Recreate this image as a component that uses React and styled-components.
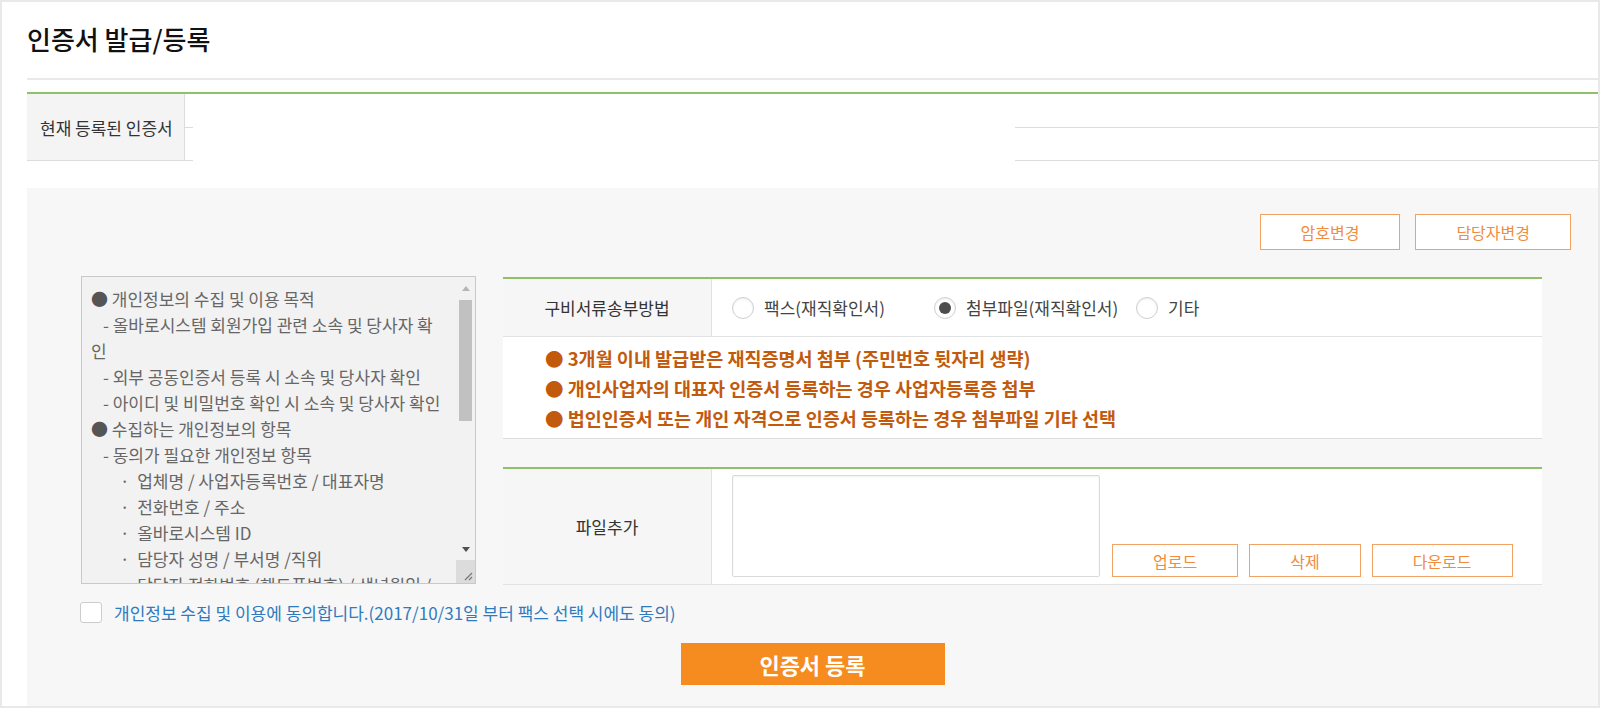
import React from "react";
import styled, { createGlobalStyle } from "styled-components";

const GlobalStyle = createGlobalStyle`
  body {
    margin: 0;
    background: #ffffff;
    font-family: "Noto Sans CJK KR", "Noto Sans", sans-serif;
    color: #333;
  }
  * { box-sizing: border-box; }
`;

const Frame = styled.div`
  width: 1600px;
  height: 708px;
  border: 2px solid #e9e9e9;
  display: flex;
  flex-direction: column;
  overflow: hidden;
`;

const Header = styled.div`
  margin-left: 25px;
  padding: 20px 0 22px;
  border-bottom: 2px solid #e9e9e9;
`;

const Title = styled.h1`
  margin: 0;
  font-size: 26px;
  line-height: 34px;
  font-weight: 500;
  color: #111;
`;

const CertTable = styled.div`
  margin: 12px 0 0 25px;
  border-top: 2px solid #8fc06c;
  display: flex;
  height: 69px;
`;

const CertTh = styled.div`
  width: 158px;
  background: #f4f4f4;
  border-right: 1px solid #dcdcdc;
  border-bottom: 1px solid #dcdcdc;
  display: flex;
  align-items: center;
  padding-left: 13px;
  font-size: 17px;
  color: #333;
  white-space: nowrap;
`;

const CertLines = styled.div`
  width: ${(p) => (p.$width ? `${p.$width}px` : "auto")};
  flex: ${(p) => (p.$width ? "none" : "1")};
  display: flex;
  flex-direction: column;
`;

const CertLine = styled.div`
  flex: 1;
  border-bottom: 1px solid #dcdcdc;
`;

const CertBlank = styled.div`
  width: 822px;
  background: #ffffff;
`;

const Panel = styled.div`
  flex: 1;
  margin: 27px 0 0 25px;
  background: #f7f7f7;
  padding: 26px 27px 0 27px;
  display: flex;
  flex-direction: column;
`;

const TopButtons = styled.div`
  display: flex;
  justify-content: flex-end;
  gap: 15px;
`;

const LineButton = styled.button`
  height: ${(p) => p.$h}px;
  padding: 0 40px;
  border: 1px solid #f2a263;
  background: #ffffff;
  color: #ef8c3d;
  font-family: inherit;
  font-size: 16px;
  cursor: pointer;
`;

const Form = styled.div`
  margin: 26px 0 0 27px;
  display: flex;
  gap: 27px;
`;

const TermsBox = styled.div`
  width: 395px;
  height: 308px;
  border: 1px solid #c9c9c9;
  background: #f2f2f2;
  display: flex;
`;

const TermsText = styled.div`
  flex: 1;
  padding: 9px 11px 0 9px;
  overflow: hidden;
  font-size: 17px;
  line-height: 26px;
  color: #666;
`;

const TermLine = styled.div`
  text-indent: ${(p) => p.$indent || 0}px;
  white-space: pre-wrap;
`;

const Dot = styled.span`
  color: #555;
`;

const ScrollBar = styled.div`
  width: 19px;
  display: flex;
  flex-direction: column;
`;

const ArrowButton = styled.div`
  height: 22px;
  display: flex;
  align-items: center;
  justify-content: center;
`;

const Track = styled.div`
  flex: 1;
`;

const Thumb = styled.div`
  margin: 1px 3px 0;
  height: 121px;
  background: #c1c1c1;
`;

const Corner = styled.div`
  height: 23px;
  background: #dcdcdc;
  display: flex;
  align-items: flex-end;
  justify-content: flex-end;
  padding: 0 2px 2px 0;
`;

const RightCol = styled.div`
  width: 1039px;
  padding-top: 1px;
`;

const FormTable = styled.div`
  border-top: 2px solid #8fc06c;
  margin-top: ${(p) => p.$gap || 0}px;
`;

const Row = styled.div`
  display: flex;
  height: ${(p) => p.$h}px;
  border-bottom: 1px solid #e2e2e2;
`;

const Th = styled.div`
  width: 209px;
  background: #f6f6f6;
  border-right: 1px solid #e2e2e2;
  display: flex;
  align-items: center;
  justify-content: center;
  font-size: 17px;
  color: #333;
`;

const Td = styled.div`
  flex: 1;
  background: #ffffff;
  display: flex;
  align-items: ${(p) => p.$align || "center"};
  padding: ${(p) => p.$pad || "0 0 0 20px"};
`;

const RadioOption = styled.label`
  width: 202px;
  display: flex;
  align-items: center;
  gap: 10px;
  font-size: 17px;
  color: #444;
`;

const RadioMark = styled.span`
  width: 22px;
  height: 22px;
  border-radius: 50%;
  border: 1px solid #cfcfcf;
  background: #ffffff;
  box-shadow: inset 0 1px 2px rgba(0, 0, 0, 0.08);
  display: flex;
  align-items: center;
  justify-content: center;
  flex: none;
  &::after {
    content: "";
    width: 12px;
    height: 12px;
    border-radius: 50%;
    background: ${(p) => (p.$checked ? "#4d4d4d" : "transparent")};
  }
`;

const Notice = styled.div`
  background: #ffffff;
  padding: 6px 0 5px 42px;
  border-bottom: 1px solid #dcdcdc;
  font-size: 18.5px;
  line-height: 30px;
  font-weight: 700;
  color: #c25a0e;
`;

const FileBox = styled.div`
  width: 368px;
  height: 102px;
  border: 1px solid #d9d9d9;
  border-radius: 2px;
  background: #ffffff;
  box-shadow: inset 0 1px 2px rgba(0, 0, 0, 0.06);
  margin-right: 12px;
`;

const FileButtons = styled.div`
  display: flex;
  gap: 11px;
`;

const AgreeRow = styled.label`
  margin: 15px 0 0 26px;
  display: flex;
  align-items: center;
  gap: 12px;
  font-size: 17px;
  color: #2f7bbf;
`;

const CheckBox = styled.span`
  width: 22px;
  height: 21px;
  border: 1px solid #cccccc;
  border-radius: 3px;
  background: #ffffff;
`;

const SubmitRow = styled.div`
  margin-top: 18px;
  display: flex;
  justify-content: center;
`;

const SubmitButton = styled.button`
  width: 264px;
  height: 42px;
  border: none;
  background: #f68b1f;
  color: #ffffff;
  font-family: inherit;
  font-size: 22px;
  font-weight: 700;
  cursor: pointer;
`;

const terms = [
  { text: "개인정보의 수집 및 이용 목적", dot: true },
  { text: "- 올바로시스템 회원가입 관련 소속 및 당사자 확인", indent: 12 },
  { text: "- 외부 공동인증서 등록 시 소속 및 당사자 확인", indent: 12 },
  { text: "- 아이디 및 비밀번호 확인 시 소속 및 당사자 확인", indent: 12 },
  { text: "수집하는 개인정보의 항목", dot: true },
  { text: "- 동의가 필요한 개인정보 항목", indent: 12 },
  { text: "·  업체명 / 사업자등록번호 / 대표자명", indent: 29 },
  { text: "·  전화번호 / 주소", indent: 29 },
  { text: "·  올바로시스템 ID", indent: 29 },
  { text: "·  담당자 성명 / 부서명 /직위", indent: 29 },
  { text: "·  담당자 전화번호 (핸드폰번호) / 생년월일 / 이메일", indent: 29 },
  { text: "- 수집 및 이용 목적 달성 시까지 보관", indent: 12 },
];

const notices = [
  "3개월 이내 발급받은 재직증명서 첨부 (주민번호 뒷자리 생략)",
  "개인사업자의 대표자 인증서 등록하는 경우 사업자등록증 첨부",
  "법인인증서 또는 개인 자격으로 인증서 등록하는 경우 첨부파일 기타 선택",
];

const radios = [
  { label: "팩스(재직확인서)" },
  { label: "첨부파일(재직확인서)", checked: true },
  { label: "기타" },
];

function Arrow({ down, color }) {
  return (
    <svg width="8" height="5" viewBox="0 0 8 5">
      <path d={down ? "M0 0 L8 0 L4 5 Z" : "M0 5 L8 5 L4 0 Z"} fill={color} />
    </svg>
  );
}

function ResizeGrip() {
  return (
    <svg width="10" height="10" viewBox="0 0 10 10">
      <path d="M9 2 L2 9 M9 6 L6 9" stroke="#777" strokeWidth="1.2" />
    </svg>
  );
}

export default function App() {
  return (
    <>
      <GlobalStyle />
      <Frame>
        <Header>
          <Title>인증서 발급/등록</Title>
        </Header>

        <CertTable>
          <CertTh>현재 등록된 인증서</CertTh>
          <CertLines $width={8}>
            <CertLine />
            <CertLine />
          </CertLines>
          <CertBlank />
          <CertLines>
            <CertLine />
            <CertLine />
          </CertLines>
        </CertTable>

        <Panel>
          <TopButtons>
            <LineButton $h={36}>암호변경</LineButton>
            <LineButton $h={36}>담당자변경</LineButton>
          </TopButtons>

          <Form>
            <TermsBox>
              <TermsText>
                {terms.map((t, i) => (
                  <TermLine key={i} $indent={t.indent}>
                    {t.dot && <Dot>● </Dot>}
                    {t.text}
                  </TermLine>
                ))}
              </TermsText>
              <ScrollBar>
                <ArrowButton>
                  <Arrow color="#b5b5b5" />
                </ArrowButton>
                <Track>
                  <Thumb />
                </Track>
                <ArrowButton>
                  <Arrow down color="#505050" />
                </ArrowButton>
                <Corner>
                  <ResizeGrip />
                </Corner>
              </ScrollBar>
            </TermsBox>

            <RightCol>
              <FormTable>
                <Row $h={58}>
                  <Th>구비서류송부방법</Th>
                  <Td>
                    {radios.map((r) => (
                      <RadioOption key={r.label}>
                        <RadioMark $checked={r.checked} />
                        {r.label}
                      </RadioOption>
                    ))}
                  </Td>
                </Row>
                <Notice>
                  {notices.map((n) => (
                    <div key={n}>● {n}</div>
                  ))}
                </Notice>
              </FormTable>

              <FormTable $gap={28}>
                <Row $h={116}>
                  <Th>파일추가</Th>
                  <Td $align="flex-end" $pad="5px 20px 7px 20px">
                    <FileBox />
                    <FileButtons>
                      <LineButton $h={33}>업로드</LineButton>
                      <LineButton $h={33}>삭제</LineButton>
                      <LineButton $h={33}>다운로드</LineButton>
                    </FileButtons>
                  </Td>
                </Row>
              </FormTable>
            </RightCol>
          </Form>

          <AgreeRow>
            <CheckBox />
            개인정보 수집 및 이용에 동의합니다.(2017/10/31일 부터 팩스 선택 시에도 동의)
          </AgreeRow>

          <SubmitRow>
            <SubmitButton>인증서 등록</SubmitButton>
          </SubmitRow>
        </Panel>
      </Frame>
    </>
  );
}
